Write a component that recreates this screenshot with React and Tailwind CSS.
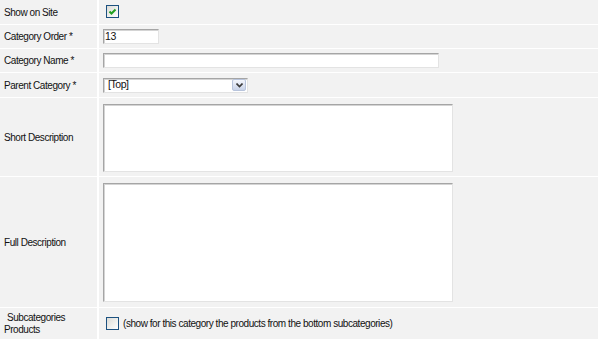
const font = { fontFamily: '"Liberation Sans", Arial, sans-serif' };

const Checkbox = ({ checked }) => (
  <span className="inline-flex h-[13px] w-[13px] shrink-0 items-center justify-center border border-[#1c5180] bg-gradient-to-br from-[#dcdcd7] to-white">
    {checked && (
      <svg width="9" height="9" viewBox="0 0 9 9">
        <path d="M1.5 4.5 L3.5 6.5 L7.5 2.5" fill="none" stroke="#21a121" strokeWidth="2" />
      </svg>
    )}
  </span>
);

const inset = 'border border-t-[#a5a5a5] border-l-[#a5a5a5] border-r-[#e3e3e3] border-b-[#e3e3e3] bg-white shadow-[inset_1px_1px_0_#d4d4d4]';

const Row = ({ label, h, children, top }) => (
  <div className="grid grid-cols-[97px_1fr] gap-x-[2px]">
    <div className={`flex items-center bg-[#f2f2f2] pl-[4px] ${h}`}>{label}</div>
    <div className={`flex bg-[#f2f2f2] pl-[4px] ${top ? 'items-start' : 'items-center'} ${h}`}>{children}</div>
  </div>
);

export default function App() {
  return (
    <div className="flex h-[339px] w-[598px] flex-col gap-y-[1px] overflow-hidden bg-white text-[10px] tracking-[-0.45px] text-[#111]" style={font}>
      <Row label="Show on Site" h="h-[24px]">
        <span className="pl-[3px]"><Checkbox checked /></span>
      </Row>
      <Row label="Category Order *" h="h-[23px]">
        <div className={`flex h-[15px] w-[56px] items-center pl-[1px] text-[10.5px] ${inset}`}>13</div>
      </Row>
      <Row label="Category Name *" h="h-[23px]">
        <div className={`h-[15px] w-[336px] ${inset}`} />
      </Row>
      <Row label="Parent Category *" h="h-[24px]">
        <div className={`flex h-[15px] w-[145px] items-center justify-between pl-[4px] pr-[1px] text-[10.5px] ${inset}`}>
          <span>[Top]</span>
          <span className="flex h-[12px] w-[14px] items-center justify-center rounded-[2px] border border-[#b8c4dc] bg-gradient-to-b from-[#f4f6fc] to-[#c8d2e8]">
            <svg width="7" height="5" viewBox="0 0 7 5">
              <path d="M0.5 0.5 L3.5 3.5 L6.5 0.5" fill="none" stroke="#3a3a3a" strokeWidth="1.6" />
            </svg>
          </span>
        </div>
      </Row>
      <Row label="Short Description" h="h-[78px]" top>
        <div className={`mt-[6px] h-[68px] w-[350px] ${inset}`} />
      </Row>
      <Row label="Full Description" h="h-[130px]" top>
        <div className={`mt-[6px] h-[119px] w-[350px] ${inset}`} />
      </Row>
      <Row
        label={
          <span className="leading-[12px]">
            <span className="pl-[3px]">Subcategories</span>
            <br />
            Products
          </span>
        }
        h="h-[31px]"
      >
        <span className="flex items-center gap-[4px] pl-[3px]">
          <Checkbox />
          <span>(show for this category the products from the bottom subcategories)</span>
        </span>
      </Row>
    </div>
  );
}
